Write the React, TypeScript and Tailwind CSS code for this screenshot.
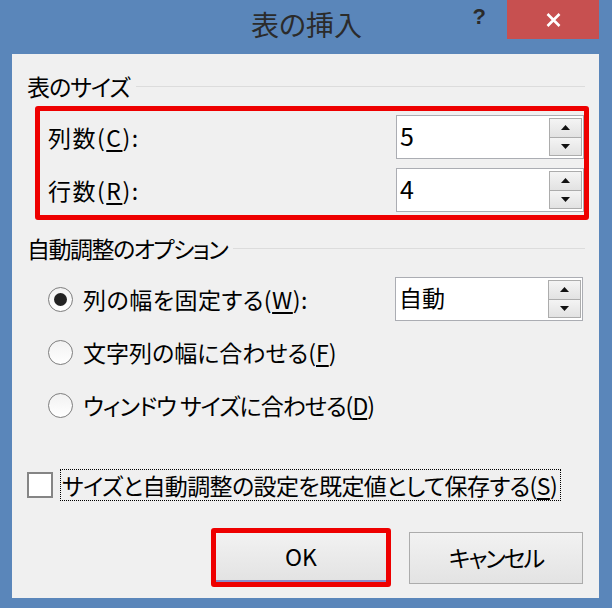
import React from "react";

const font = "font-['Noto_Sans_CJK_JP','Noto_Sans',sans-serif] [font-feature-settings:'palt']";

function Arrow({ down }: { down?: boolean }) {
  return (
    <svg width="9" height="5" viewBox="0 0 9 5">
      {down ? <path d="M0 0 L9 0 L4.5 5Z" fill="#111" /> : <path d="M0 5 L4.5 0 L9 5Z" fill="#111" />}
    </svg>
  );
}

function Spin({ value, big }: { value: string; big?: boolean }) {
  return (
    <div className="w-[188px] h-[44px] border border-[#abadb3] bg-white flex items-center shrink-0">
      <span className={`flex-1 pl-[3px] pb-[4px] leading-none text-black ${big ? "text-[25px]" : "text-[23px]"}`}>{value}</span>
      <div className="w-[33px] h-[38px] mr-[1px] flex flex-col">
        <div className="flex-1 border border-[#acacac] bg-linear-to-b from-[#f4f4f4] to-[#e2e2e2] flex items-center justify-center">
          <Arrow />
        </div>
        <div className="flex-1 border border-t-0 border-[#acacac] bg-linear-to-b from-[#f4f4f4] to-[#e2e2e2] flex items-center justify-center">
          <Arrow down />
        </div>
      </div>
    </div>
  );
}

function Radio({ checked }: { checked?: boolean }) {
  return (
    <div className="w-[25px] h-[25px] rounded-full border border-[#7e7e7e] bg-linear-to-b from-[#f2f2f2] to-white flex items-center justify-center shrink-0">
      {checked && <div className="w-[13px] h-[13px] rounded-full bg-[#222]" />}
    </div>
  );
}

function GroupHeader({ label, track }: { label: string; track: string }) {
  return (
    <div className="h-[24px] flex items-center pl-[15px] pr-[14px]">
      <span className={`text-[23px] leading-none text-black whitespace-nowrap ${track}`}>{label}</span>
      <div className="flex-1 h-px bg-[#dcdcdc] ml-[6px]" />
    </div>
  );
}

export default function App() {
  return (
    <div className={`w-[612px] h-[608px] bg-[#5a86ba] flex flex-col ${font}`}>
      <div className="relative h-[54px] shrink-0 flex justify-center pt-[10px]">
        <span className="text-[28px] leading-none text-[#2b2b2b] pl-[1px]">表の挿入</span>
        <div className="absolute right-[13px] top-0 flex items-start">
          <span className="mt-[6px] mr-[21px] font-['Liberation_Sans',sans-serif] font-bold text-[22px] leading-none text-[#2a2a2a]">?</span>
          <div className="w-[92px] h-[39px] bg-[#c75050] flex items-center justify-center">
            <svg width="15" height="14" viewBox="0 0 15 14">
              <path d="M1.5 1 L13.5 13 M13.5 1 L1.5 13" stroke="#fff" strokeWidth="2.6" />
            </svg>
          </div>
        </div>
      </div>

      <div className="ml-[12px] mr-[13px] h-[544px] bg-[#f0f0f0] flex flex-col">
        <div className="mt-[20px]">
          <GroupHeader label="表のサイズ" track="tracking-[-1px]" />
        </div>

        <div className="mt-[8px] ml-[23px] mr-[10px] h-[114px] border-[5px] border-[#ee0000] rounded-[3px] flex flex-col pt-[4px] pb-[3px] pl-[8px] pr-[0px] gap-[9px]">
          <div className="h-[44px] flex items-center justify-between">
            <span className="text-[23px] leading-none text-black tracking-[1.5px]">
              列数(<span className="underline underline-offset-[3px]">C</span>):
            </span>
            <Spin value="5" big />
          </div>
          <div className="h-[44px] flex items-center justify-between">
            <span className="text-[23px] leading-none text-black tracking-[1.5px]">
              行数(<span className="underline underline-offset-[3px]">R</span>):
            </span>
            <Spin value="4" big />
          </div>
        </div>

        <div className="mt-[16px]">
          <GroupHeader label="自動調整のオプション" track="tracking-[-1.5px]" />
        </div>

        <div className="mt-[17px] h-[44px] flex items-center pl-[36px] pr-[16px]">
          <Radio checked />
          <span className="ml-[10px] flex-1 text-[23px] leading-none text-black tracking-[0.5px]">
            列の幅を固定する(<span className="underline underline-offset-[3px]">W</span>):
          </span>
          <Spin value="自動" />
        </div>
        <div className="mt-[9px] h-[44px] flex items-center pl-[36px]">
          <Radio />
          <span className="ml-[10px] text-[23px] leading-none text-black">
            文字列の幅に合わせる(<span className="underline underline-offset-[3px]">F</span>)
          </span>
        </div>
        <div className="mt-[9px] h-[44px] flex items-center pl-[36px]">
          <Radio />
          <span className="ml-[10px] text-[23px] leading-none text-black tracking-[-1px]">
            ウィンドウ サイズに合わせる(<span className="underline underline-offset-[3px]">D</span>)
          </span>
        </div>

        <div className="mt-[42px] h-[32px] flex items-center pl-[15px]">
          <div className="w-[26px] h-[26px] border-2 border-[#858585] bg-white shrink-0" />
          <div className="ml-[7px] h-[32px] border border-dotted border-black flex items-center pl-[1px] pr-[3px]">
            <span className="text-[23px] leading-none text-black whitespace-nowrap tracking-[-0.6px]">
              サイズと自動調整の設定を既定値として保存する(<span className="underline underline-offset-[3px]">S</span>)
            </span>
          </div>
        </div>

        <div className="mt-[27px] h-[59px] flex items-center justify-end pr-[16px] gap-[18px]">
          <div className="w-[180px] h-[59px] border-[5px] border-[#ee0000] rounded-[3px] flex">
            <div className="flex-1 border-b-2 border-[#8c8cc8] bg-linear-to-b from-[#f2f2f2] to-[#e3e3e3] flex items-center justify-center">
              <span className="text-[23px] leading-none text-black">OK</span>
            </div>
          </div>
          <div className="w-[174px] h-[52px] border border-[#acacac] bg-linear-to-b from-[#f2f2f2] to-[#e3e3e3] flex items-center justify-center">
            <span className="text-[23px] leading-none text-black tracking-[-2px]">キャンセル</span>
          </div>
        </div>
      </div>
    </div>
  );
}
